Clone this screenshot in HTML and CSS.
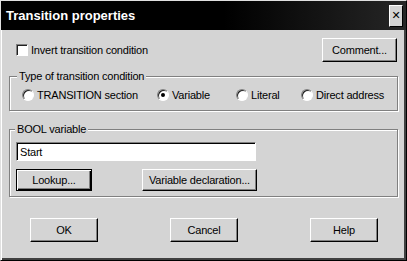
FILE: index.html
```html
<!DOCTYPE html>
<html lang="en">

<head>
  <meta charset="UTF-8" />
  <title>Transition properties</title>
  <link rel="stylesheet" href="styles.css">
</head>

<body>

  <div class="dialog">
    <!-- Barra de titulo -->
    <div class="titlebar">
      <span class="title">Transition properties</span>
      <button class="closeBtn">&#10005;</button>
    </div>

    <div class="contenido">
      <div class="filaTop">
        <label class="check">
          <span class="checkbox"></span>
          Invert transition condition
        </label>
        <button class="btn btnComment">Comment...</button>
      </div>

      <fieldset class="grupo grupoTipo">
        <legend>Type of transition condition</legend>
        <div class="radios">
          <label class="radio"><span class="circulo"></span>TRANSITION section</label>
          <label class="radio"><span class="circulo marcado"></span>Variable</label>
          <label class="radio"><span class="circulo"></span>Literal</label>
          <label class="radio"><span class="circulo"></span>Direct address</label>
        </div>
      </fieldset>

      <fieldset class="grupo grupoVar">
        <legend>BOOL variable</legend>
        <div class="campo">Start</div>
        <div class="filaBotones">
          <button class="btn btnDefault btnLookup">Lookup...</button>
          <button class="btn btnDecl">Variable declaration...</button>
        </div>
      </fieldset>

      <div class="pie">
        <button class="btn btnPie">OK</button>
        <button class="btn btnPie">Cancel</button>
        <button class="btn btnPie">Help</button>
      </div>
    </div>
  </div>

</body>

</html>
```

FILE: styles.css
```css
:root {
  --gris: #d4d4d4;
  --sombra: #808080;
}

* {
  box-sizing: border-box;
}

body {
  margin: 0;
  font-family: 'Liberation Sans', Arial, sans-serif;
  font-size: 11px;
  letter-spacing: -0.2px;
  color: #000;
  background: var(--gris);
}

.dialog {
  width: 407px;
  height: 261px;
  background: var(--gris);
  border: 1px solid;
  border-color: #e0e0e0 #000 #000 #e0e0e0;
  box-shadow: inset 1px 1px 0 #fff, inset -2px -2px 0 #404040;
  display: flex;
  flex-direction: column;
}

.titlebar {
  height: 29px;
  background: linear-gradient(to right, #000 55%, #262626);
  display: flex;
  align-items: center;
  justify-content: space-between;
  padding: 0 3px 0 5px;
}

.title {
  color: #fff;
  font-weight: bold;
  font-size: 13px;
  letter-spacing: 0;
}

.closeBtn {
  width: 14px;
  height: 22px;
  padding: 0;
  background: var(--gris);
  border: 1px solid;
  border-color: #fff #000 #000 #fff;
  font-family: 'DejaVu Sans', sans-serif;
  font-weight: bold;
  font-size: 11px;
  line-height: 18px;
  color: #000;
}

.contenido {
  padding: 8px 8px 0 8px;
  display: flex;
  flex-direction: column;
}

.btn {
  background: var(--gris);
  border: 1px solid;
  border-color: #fff #000 #000 #fff;
  box-shadow: inset -1px -1px 0 var(--sombra);
  font-family: 'Liberation Sans', Arial, sans-serif;
  font-size: 11px;
  letter-spacing: -0.2px;
  color: #000;
  padding: 0;
  height: 24px;
}

.btnDefault {
  border-color: #000;
  box-shadow: inset 1px 1px 0 #fff, inset -1px -1px 0 #000, inset -2px -2px 0 var(--sombra);
}

.filaTop {
  display: flex;
  justify-content: space-between;
  align-items: center;
  height: 24px;
  padding-left: 7px;
  padding-right: 1px;
}

.check {
  display: flex;
  align-items: center;
  gap: 3px;
}

.checkbox {
  width: 12px;
  height: 12px;
  background: #fff;
  border: 1px solid;
  border-color: var(--sombra) #fff #fff var(--sombra);
  box-shadow: inset 1px 1px 0 #202020;
}

.btnComment {
  width: 75px;
}

.grupo {
  margin: 0;
  border: 1px solid var(--sombra);
  box-shadow: 1px 1px 0 #fff, inset 1px 1px 0 #fff;
}

.grupo legend {
  padding: 0 2px;
  margin-left: -1px;
  background: var(--gris);
  line-height: 13px;
}

.grupoTipo {
  margin-top: 8px;
  padding: 5px 8px 8px 8px;
}

.radios {
  display: grid;
  grid-template-columns: 135px 79px 65px auto;
  padding-left: 4px;
  height: 14px;
  align-items: center;
}

.radio {
  display: flex;
  align-items: center;
  gap: 3px;
  white-space: nowrap;
}

.circulo {
  width: 12px;
  height: 12px;
  border-radius: 50%;
  background: #fff;
  border: 1px solid;
  border-color: var(--sombra) #fff #fff var(--sombra);
  box-shadow: inset 1px 1px 0 #202020;
  display: flex;
  align-items: center;
  justify-content: center;
}

.circulo.marcado::after {
  content: "";
  width: 4px;
  height: 4px;
  border-radius: 50%;
  background: #000;
}

.grupoVar {
  margin-top: 12px;
  padding: 6px 6px 5px 6px;
}

.campo {
  width: 240px;
  height: 19px;
  background: #fff;
  border: 1px solid;
  border-color: var(--sombra) #fff #fff var(--sombra);
  box-shadow: inset 1px 1px 0 #000;
  padding: 2px 3px;
  line-height: 14px;
}

.filaBotones {
  display: flex;
  gap: 50px;
  margin-top: 8px;
}

.btnLookup {
  width: 76px;
  height: 22px;
}

.btnDecl {
  width: 115px;
  height: 22px;
}

.pie {
  display: flex;
  gap: 72px;
  margin-top: 21px;
  padding-left: 21px;
}

.btnPie {
  width: 68px;
}
```
